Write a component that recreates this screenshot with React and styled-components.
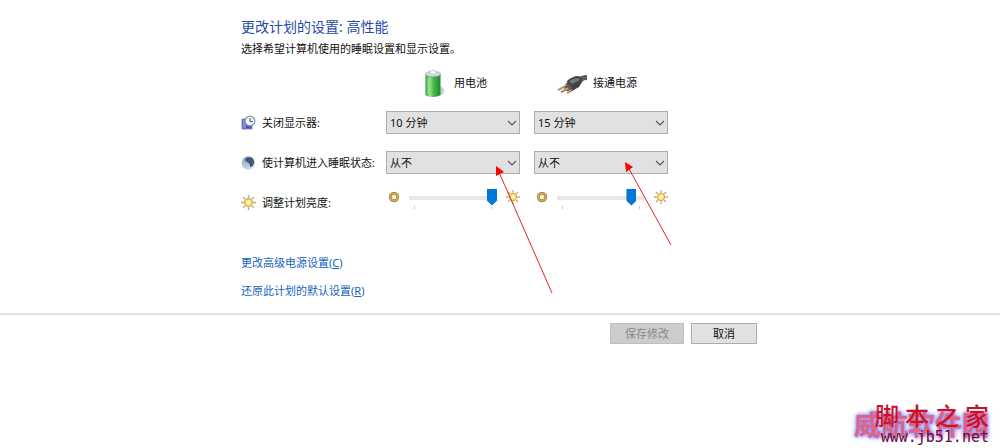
import React, { useState } from "react"
import styled, { createGlobalStyle } from "styled-components"

const GlobalStyle = createGlobalStyle`
  * {
    box-sizing: border-box;
  }

  body {
    margin: 0;
    background-color: #fff;
    color: #111;
    font-family: "Noto Sans", "Noto Sans CJK SC", sans-serif;
    font-size: 11px;
    line-height: 16px;
  }
`;

const Page = styled.div`
  position: relative;
  min-height: 100vh;
  overflow: hidden;
`;

const Content = styled.main`
  position: relative;
  max-width: 518px;
  margin: 0 auto;
  padding-top: 17px;
`;

const Title = styled.h1`
  margin: 0 0 4px;
  color: #1f4aa8;
  font-size: 14px;
  font-weight: 400;
  line-height: 20px;
`;

const Description = styled.p`
  margin: 0 0 10px;
`;

const Row = styled.div`
  display: grid;
  grid-template-columns: 131px 134px 134px;
  grid-template-rows: 23px;
  column-gap: 14px;
  align-items: center;
  margin-bottom: 17px;
  white-space: nowrap;
`;

const HeaderRow = styled(Row)`
  grid-template-rows: 32px;
  margin-bottom: 12px;
`;

const ColumnTitle = styled.div`
  display: flex;
  align-items: center;
  gap: 5px;
  grid-column: ${(props) => props.$column};
  padding-left: ${(props) => props.$indent}px;
`;

const RowLabel = styled.div`
  display: flex;
  align-items: center;
  gap: 6px;

  svg {
    flex: none;
  }
`;

const SelectBox = styled.div`
  display: grid;
  align-items: center;

  > * {
    grid-area: 1 / 1;
  }

  svg {
    justify-self: end;
    margin-right: 3px;
    pointer-events: none;
  }
`;

const Select = styled.select`
  width: 100%;
  height: 23px;
  padding: 0 3px;
  appearance: none;
  border: 1px solid #adadad;
  border-radius: 0;
  background-color: #e1e1e1;
  color: #111;
  font: inherit;
`;

const SliderBox = styled.div`
  display: flex;
  align-items: flex-start;
  height: 27px;
  padding-left: 2px;
  gap: 9px;

  > svg {
    flex: none;
    margin-top: 1px;
  }
`;

const SliderTrack = styled.div`
  flex: 1;
  min-width: 0;
`;

const Range = styled.input`
  display: block;
  width: 100%;
  height: 17px;
  margin: 0;
  appearance: none;
  background: transparent;

  &::-webkit-slider-runnable-track {
    height: 4px;
    background-color: #e7e7e7;
  }

  &::-webkit-slider-thumb {
    appearance: none;
    width: 10px;
    height: 17px;
    margin-top: -7px;
    background-color: #0078d7;
    clip-path: polygon(0 0, 100% 0, 100% 72%, 50% 100%, 0 72%);
  }
`;

const Ticks = styled.div`
  height: 3px;
  margin: 0 5px;
  border: solid #c9c9c9;
  border-width: 0 1px;
`;

const Links = styled.div`
  display: flex;
  flex-direction: column;
  align-items: flex-start;
  gap: 12px;
  padding: 24px 0 14px;
`;

const Link = styled.a`
  color: #1565bd;
  text-decoration: none;
`;

const Footer = styled.footer`
  border-top: 2px solid #e1e1e1;
`;

const Buttons = styled.div`
  display: flex;
  justify-content: flex-end;
  gap: 7px;
  max-width: 518px;
  margin: 0 auto;
  padding: 8px 2px;
`;

const Button = styled.button`
  height: 21px;
  min-width: 66px;
  padding: 0 14px;
  border: 1px solid #adadad;
  background-color: #e1e1e1;
  color: #111;
  font: inherit;
  line-height: 16px;

  &:disabled {
    border-color: #bfbfbf;
    background-color: #ccc;
    color: #898989;
  }
`;

const Arrows = styled.svg`
  position: absolute;
  top: 0;
  left: 0;
  pointer-events: none;
`;

const Watermark = styled.div`
  position: absolute;
  right: 8px;
  bottom: 4px;
  width: 138px;
  display: grid;
  white-space: nowrap;

  > * {
    grid-area: 1 / 1;
  }
`;

const SiteShadow = styled.div`
  align-self: end;
  padding-bottom: 4px;
  color: #e0647f;
  font-size: 27px;
  font-weight: 700;
  line-height: 30px;
  text-shadow: 0 0 2px #8c8cff, 0 0 4px #8c8cff, 0 0 5px #a4a4ff;
`;

const Site = styled.div`
  z-index: 1;
  justify-self: end;
  width: 114px;
  margin-right: 3px;
`;

const SiteName = styled.div`
  display: flex;
  justify-content: space-between;
  color: #cb1029;
  font-size: 24px;
  font-weight: 500;
  line-height: 28px;
`;

const SiteUrl = styled.div`
  color: #6e0838;
  font-family: "DejaVu Sans Mono", monospace;
  font-size: 15px;
  line-height: 14px;
  text-align: right;
`;

function BatteryIcon() {
  return (
    <svg width="32" height="32" viewBox="0 0 32 32" aria-hidden="true">
      <defs>
        <linearGradient id="battery">
          <stop offset="0" stopColor="#2c9a35" />
          <stop offset="0.28" stopColor="#93e583" />
          <stop offset="0.55" stopColor="#46b94a" />
          <stop offset="1" stopColor="#1c8a2c" />
        </linearGradient>
      </defs>
      <path d="M20 29c5 0 8-3 7-7l-3-3z" fill="#cfd2cf" />
      <path d="M8.500 7v21c2 2.500 12 2.500 15 0V7z" fill="url(#battery)" />
      <path d="M8.500 7c1-3.500 14-3.500 15 0 0 3.500-15 3.500-15 0z" fill="#d3e0ea" stroke="#8aa79b" strokeWidth="0.8" />
      <path d="M13 5c0-2 6-2 6 0v1.500c-1 1-5 1-6 0z" fill="#fbfdfe" stroke="#a9b9c4" strokeWidth="0.7" />
      <path d="M11 12v15" stroke="#c6f4b9" opacity="0.6" />
    </svg>
  )
}

function PlugIcon() {
  return (
    <svg width="32" height="32" viewBox="0 0 32 32" aria-hidden="true">
      <path d="M20 12c3-3 7-4 11-4v5c-4 0-6 2-8 5z" fill="#5b5d66" />
      <path d="M11 14c3-3 7-5 11-5 3 1 4 3 4 6l-3 5-7 4c-3-2-5-5-5-10z" fill="#3f4249" />
      <path d="M13 14c3-2 6-3 9-3l2 2-8 4z" fill="#757884" />
      <path d="M10 16l5 2 2 6-4 1-5-3z" fill="#66564a" />
      <path d="M2 23l9-5M5 25l8-4M11 26l5-3" stroke="#97785c" strokeWidth="2" />
      <path d="M2 22l8-4M5 24l7-3M11 25l4-2" stroke="#e8d2ad" strokeWidth="0.8" />
    </svg>
  )
}

function DisplayIcon() {
  return (
    <svg width="15" height="16" viewBox="0 0 15 16" aria-hidden="true">
      <path d="M1 4h10v10H1z" fill="#4353bd" stroke="#8790ce" />
      <path d="M2 5h3v8H2z" fill="#7d8ade" />
      <circle cx="9" cy="6" r="4.900" fill="#eef3f9" stroke="#8494aa" strokeWidth="1.200" />
      <path d="M9 3v3.500h2.800" fill="none" stroke="#4a5a73" />
    </svg>
  )
}

function MoonIcon() {
  return (
    <svg width="15" height="16" viewBox="0 0 15 16" aria-hidden="true">
      <defs>
        <linearGradient id="moon" x2="1" y2="1">
          <stop offset="0" stopColor="#8796a8" />
          <stop offset="1" stopColor="#e3edf8" />
        </linearGradient>
      </defs>
      <circle cx="7.500" cy="8" r="6.700" fill="url(#moon)" />
      <path d="M5 3c4-2 8 0 8 4 0 3-2 5-4 5 0-3-1-4-3-5S4 5 5 3z" fill="#3f587a" />
      <path d="M3 6c0 4 2 6 6 7-3 1-6-1-7-4z" fill="#c3d4e6" />
    </svg>
  )
}

function SunIcon({ size = 14 }) {
  return (
    <svg width={size} height={size} viewBox="0 0 16 16" aria-hidden="true">
      <path
        d="M8 0v3M8 13v3M0 8h3M13 8h3M2.300 2.300l2 2M11.700 11.700l2 2M13.700 2.300l-2 2M4.300 11.700l-2 2"
        stroke="#b9ab85"
        strokeWidth="1.500"
      />
      <circle cx="8" cy="8" r="4.200" fill="#fbe07a" stroke="#d0ab52" strokeWidth="1.200" />
      <circle cx="8" cy="8" r="2" fill="#fff5bd" />
    </svg>
  )
}

function DimIcon() {
  return (
    <svg width="12" height="14" viewBox="0 0 12 14" aria-hidden="true">
      <circle cx="6" cy="7" r="3.700" fill="#fff5d4" stroke="#b28b3e" strokeWidth="3" />
      <circle cx="6" cy="7" r="3.600" fill="none" stroke="#d7b56b" />
    </svg>
  )
}

function PlanSelect({ label, value, options }) {
  return (
    <SelectBox>
      <Select aria-label={label} defaultValue={value}>
        {options.map((option) => <option key={option}>{option}</option>)}
      </Select>
      <svg width="10" height="6" viewBox="0 0 10 6" aria-hidden="true">
        <path d="M1 1l4 4 4-4" fill="none" stroke="#555" strokeWidth="1.100" />
      </svg>
    </SelectBox>
  )
}

function Brightness({ label, initial }) {
  const [value, setValue] = useState(initial);

  return (
    <SliderBox>
      <DimIcon />
      <SliderTrack>
        <Range
          type="range"
          min="0"
          max="100"
          aria-label={label}
          value={value}
          onChange={(e) => setValue(e.target.value)}
        />
        <Ticks />
      </SliderTrack>
      <SunIcon />
    </SliderBox>
  )
}

const times = ["10 分钟", "15 分钟", "从不"];

export default function App() {
  return (
    <Page>
      <GlobalStyle />
      <Content>
        <Title>更改计划的设置: 高性能</Title>
        <Description>选择希望计算机使用的睡眠设置和显示设置。</Description>
        <HeaderRow>
          <ColumnTitle $column={2} $indent={31}><BatteryIcon />用电池</ColumnTitle>
          <ColumnTitle $column={3} $indent={22}><PlugIcon />接通电源</ColumnTitle>
        </HeaderRow>
        <Row>
          <RowLabel><DisplayIcon />关闭显示器:</RowLabel>
          <PlanSelect label="关闭显示器: 用电池" value="10 分钟" options={times} />
          <PlanSelect label="关闭显示器: 接通电源" value="15 分钟" options={times} />
        </Row>
        <Row>
          <RowLabel><MoonIcon />使计算机进入睡眠状态:</RowLabel>
          <PlanSelect label="使计算机进入睡眠状态: 用电池" value="从不" options={times} />
          <PlanSelect label="使计算机进入睡眠状态: 接通电源" value="从不" options={times} />
        </Row>
        <Row>
          <RowLabel><SunIcon size={15} />调整计划亮度:</RowLabel>
          <Brightness label="调整计划亮度: 用电池" initial={100} />
          <Brightness label="调整计划亮度: 接通电源" initial={89} />
        </Row>
        <Links>
          <Link href="#advanced">更改高级电源设置(<u>C</u>)</Link>
          <Link href="#restore">还原此计划的默认设置(<u>R</u>)</Link>
        </Links>
        <Arrows width="518" height="300" viewBox="0 0 518 300" aria-hidden="true">
          <path d="M257 170L311 293M387 167L430 245" fill="none" stroke="#e32626" />
          <path d="M255 166v10l8-4zM384 162l1 10 7-5z" fill="#f00" />
        </Arrows>
      </Content>
      <Footer>
        <Buttons>
          <Button disabled>保存修改</Button>
          <Button>取消</Button>
        </Buttons>
      </Footer>
      <Watermark>
        <SiteShadow>威航软件园</SiteShadow>
        <Site>
          <SiteName>
            <span>脚</span>
            <span>本</span>
            <span>之</span>
            <span>家</span>
          </SiteName>
          <SiteUrl>www.jb51.net</SiteUrl>
        </Site>
      </Watermark>
    </Page>
  )
}
